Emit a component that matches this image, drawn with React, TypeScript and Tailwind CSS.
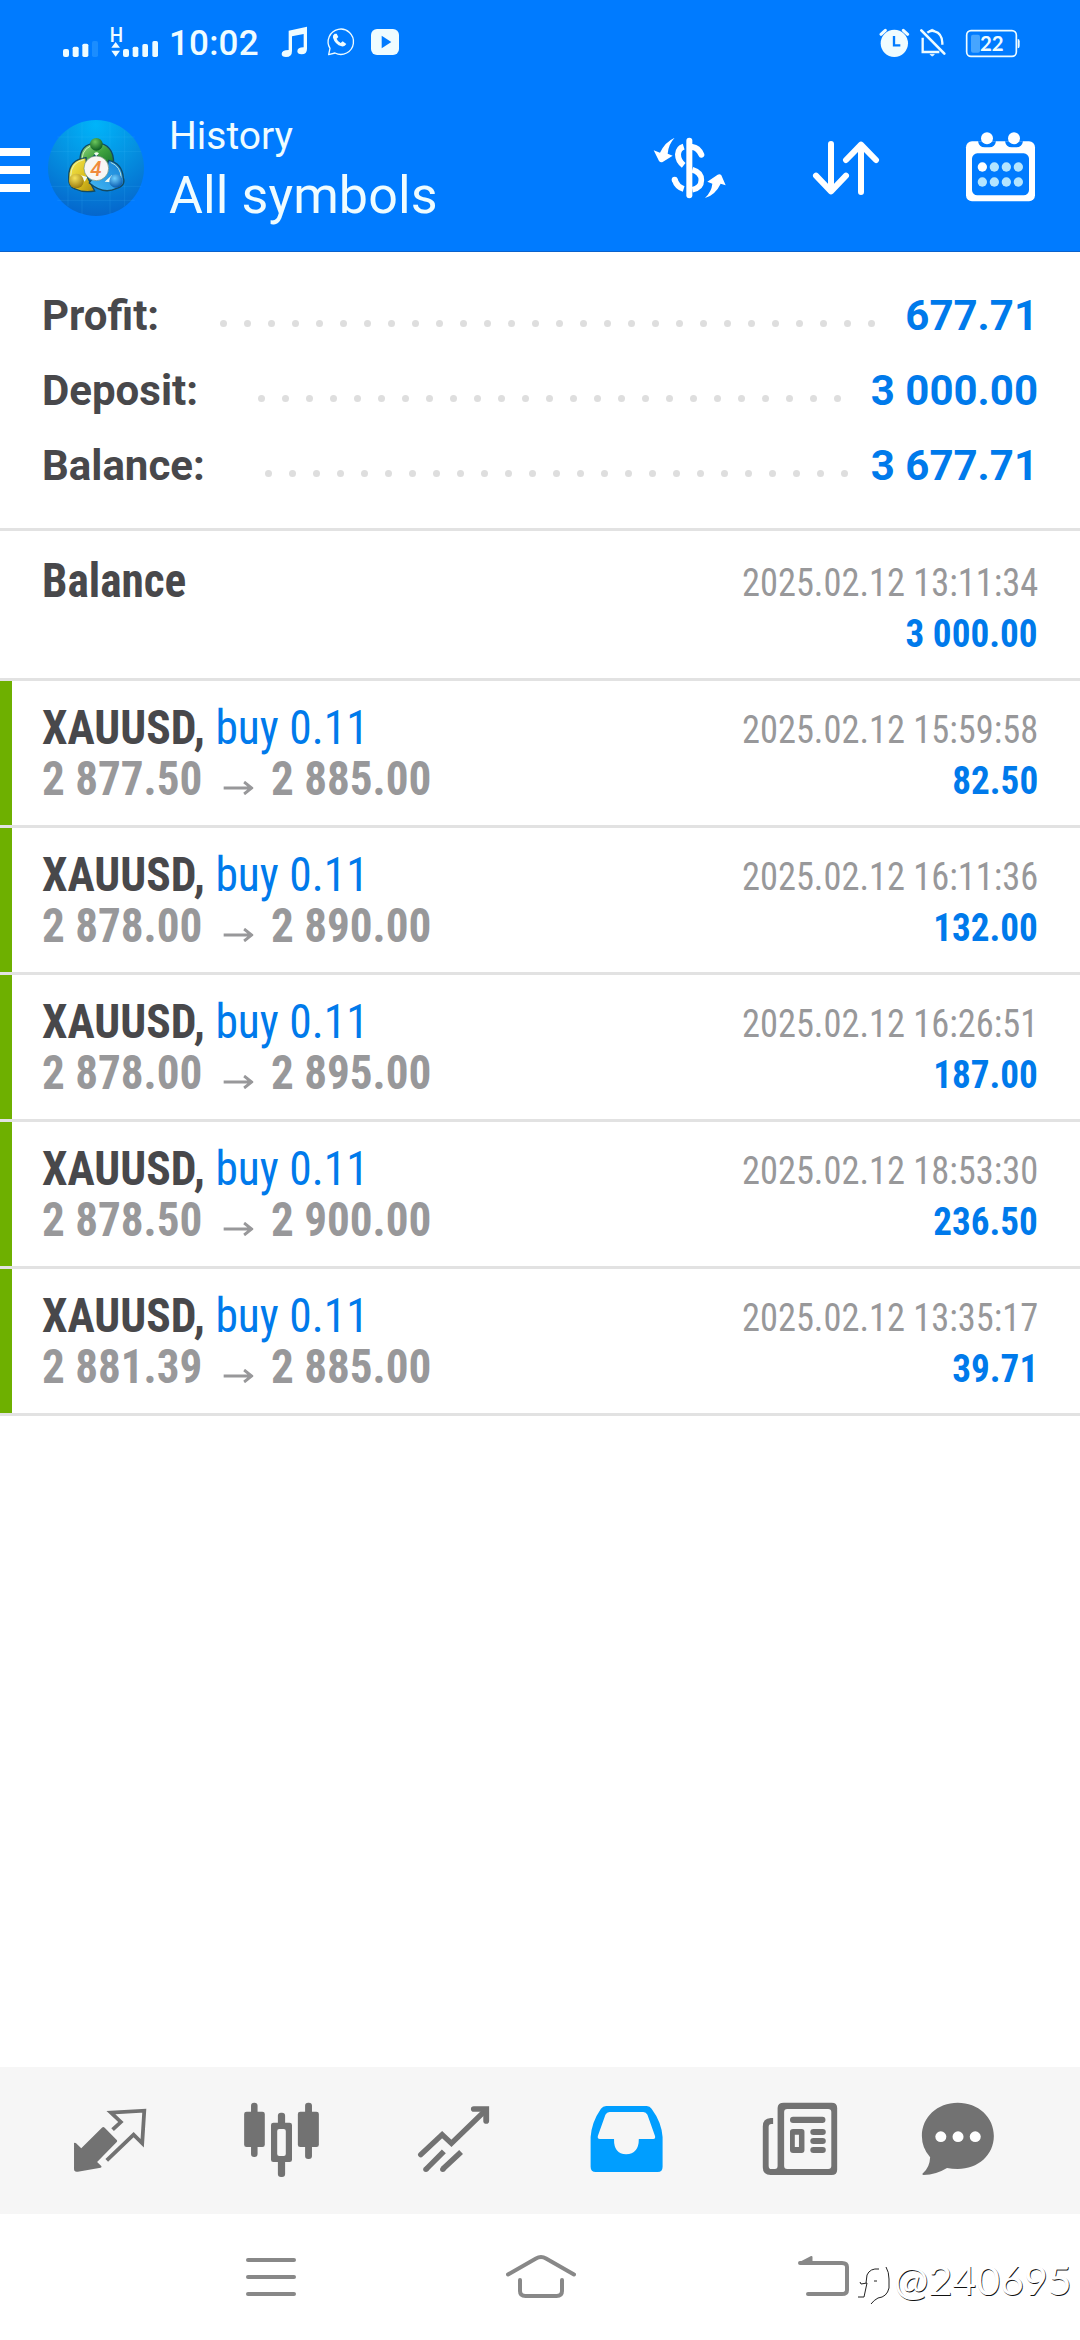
import type { ReactNode } from "react";

type Trade = { open: string; close: string; time: string; profit: string };

const trades: Trade[] = [
  { open: "2 877.50", close: "2 885.00", time: "2025.02.12 15:59:58", profit: "82.50" },
  { open: "2 878.00", close: "2 890.00", time: "2025.02.12 16:11:36", profit: "132.00" },
  { open: "2 878.00", close: "2 895.00", time: "2025.02.12 16:26:51", profit: "187.00" },
  { open: "2 878.50", close: "2 900.00", time: "2025.02.12 18:53:30", profit: "236.50" },
  { open: "2 881.39", close: "2 885.00", time: "2025.02.12 13:35:17", profit: "39.71" },
];

function StatusBar() {
  return (
    <div className="flex h-[84px] items-start pt-[25px] text-[#effcff]">
      <svg className="ml-[62px] h-[35px] w-[37px] shrink-0" viewBox="186 75 111 105" fill="currentColor">
        <rect x="189" y="147" width="18" height="24" rx="6" />
        <rect x="218" y="140" width="18" height="31" rx="5" />
        <rect x="247" y="131" width="18" height="40" rx="5" />
        <rect x="276" y="123" width="18" height="48" rx="5" fill="#1b8dff" />
      </svg>
      <svg className="ml-[10px] h-[35px] w-[50px] shrink-0" viewBox="327 75 150 105" fill="currentColor">
        <text x="329" y="125" fontSize="59" fontWeight="500" fontFamily="Roboto, sans-serif" textLength="40" lengthAdjust="spacingAndGlyphs">H</text>
        <path d="M347 126l13 17h-26zM347 170l13-18h-26z" />
        <rect x="369" y="147" width="18" height="24" rx="6" />
        <rect x="398" y="140" width="17" height="31" rx="5" />
        <rect x="427" y="132" width="17" height="39" rx="5" />
        <rect x="457" y="123" width="17" height="48" rx="5" />
      </svg>
      <span className="ml-[10px] mt-[-3px] w-[92px] whitespace-nowrap text-[35px] font-medium leading-[43px] tracking-[0.2px]">10:02</span>
      <svg className="ml-[20px] h-[35px] w-[27px] shrink-0" viewBox="843 75 81 105" fill="currentColor">
        <path d="M866 92L921 80V146Q921 163 905 163Q892 163 892 154Q892 142 911 142V102L876 109V153Q876 171 858 171Q845 171 845 162Q845 150 866 150Z" />
      </svg>
      <svg className="ml-[17px] h-[35px] w-[30px] shrink-0" viewBox="974 75 90 105" fill="none" stroke="currentColor" strokeWidth="4">
        <path d="M985 164l4-19a38 38 0 1 1 15 14z" strokeLinejoin="round" />
        <path d="M1003 101q-7 4-5 12q6 20 26 26q9 2 14-7l-11-8-6 5q-9-4-12-13l5-5-5-10z" fill="currentColor" stroke="none" />
      </svg>
      <svg className="ml-[15px] h-[35px] w-[30px] shrink-0" viewBox="1107 75 90 105">
        <rect x="1110" y="87" width="84" height="78" rx="18" fill="currentColor" />
        <path d="M1142 107L1171 126L1142 145Z" fill="#007bff" />
      </svg>
      <svg className="ml-auto h-[35px] w-[31px] shrink-0" viewBox="776 75 93 105" fill="currentColor">
        <circle cx="822" cy="130" r="41" />
        <path d="M782 103l13-12M862 103l-13-12" stroke="currentColor" strokeWidth="9" strokeLinecap="round" />
        <path d="M821 108v28h19" fill="none" stroke="#007bff" strokeWidth="7" />
      </svg>
      <svg className="ml-[9px] h-[35px] w-[28px] shrink-0" viewBox="897 75 84 105" fill="none" stroke="currentColor" strokeWidth="7">
        <path d="M904 91l69 70" strokeLinecap="round" strokeWidth="8" />
        <path d="M908 113v43h50M922 98q10-8 22-4q22 6 23 34v6" />
        <path d="M928 92q8-9 17 0zM930 163h13q-6 10-13 0z" fill="currentColor" strokeWidth="2" />
      </svg>
      <svg className="ml-[18px] mr-[59px] h-[35px] w-[56px] shrink-0" viewBox="1035 75 168 105" fill="currentColor">
        <rect x="1040" y="92" width="149" height="77" rx="13" fill="none" stroke="currentColor" strokeWidth="5" />
        <path d="M1193 117q6 0 6 7v14q0 7-6 7z" />
        <rect x="1053" y="104" width="27" height="54" rx="6" fill="#46a5ff" />
        <text x="1080" y="153" fontSize="60" fontWeight="700" fontFamily="Lato, sans-serif" textLength="71" lengthAdjust="spacingAndGlyphs">22</text>
      </svg>
    </div>
  );
}

function Logo() {
  return (
    <svg className="ml-[18px] size-[96px] shrink-0" viewBox="144 359 288 288">
      <defs>
        <radialGradient id="disc" cx="0.5" cy="0.05" r="0.95">
          <stop offset="0" stopColor="#00b4fa" />
          <stop offset="0.5" stopColor="#0590e0" />
          <stop offset="1" stopColor="#0566cc" />
        </radialGradient>
        <linearGradient id="green" x1="0" y1="0" x2="1" y2="1">
          <stop offset="0" stopColor="#a6e08a" />
          <stop offset="0.5" stopColor="#3fa23f" />
          <stop offset="1" stopColor="#13702a" />
        </linearGradient>
        <linearGradient id="yellow" x1="0" y1="0" x2="1" y2="1">
          <stop offset="0" stopColor="#f9ee5a" />
          <stop offset="0.6" stopColor="#d9bd1c" />
          <stop offset="1" stopColor="#a98a10" />
        </linearGradient>
        <linearGradient id="blue" x1="1" y1="0" x2="0" y2="1">
          <stop offset="0" stopColor="#1580d4" />
          <stop offset="1" stopColor="#43b8f5" />
        </linearGradient>
        <radialGradient id="headGreen" cx="0.4" cy="0.3" r="0.7">
          <stop offset="0" stopColor="#6cc75c" />
          <stop offset="1" stopColor="#0d5f22" />
        </radialGradient>
        <radialGradient id="headYellow" cx="0.4" cy="0.3" r="0.7">
          <stop offset="0" stopColor="#f7e35a" />
          <stop offset="1" stopColor="#9c7c10" />
        </radialGradient>
        <radialGradient id="headBlue" cx="0.4" cy="0.3" r="0.7">
          <stop offset="0" stopColor="#6fd0ff" />
          <stop offset="1" stopColor="#0a5cb0" />
        </radialGradient>
      </defs>
      <circle cx="288" cy="503" r="144" fill="url(#disc)" />
      <path d="M204 390v228M246 368v274M330 368v274M374 390v228M172 410h232M152 453h272M152 558h272M172 600h232" stroke="#4fc4ff" strokeOpacity="0.22" strokeWidth="2" />
      <g stroke="#124a63" strokeWidth="4">
        <path d="M240 484Q238 432 289 427Q342 432 341 490Q336 506 318 500L288 462L262 482Z" fill="url(#green)" />
        <path d="M258 472Q206 478 206 530Q204 560 226 566Q250 578 284 572L262 530Z" fill="url(#yellow)" />
        <path d="M326 480Q366 488 370 532Q378 556 350 564Q310 584 268 548L280 530L312 526Z" fill="url(#blue)" />
      </g>
      <path d="M282 459L289 468L297 459Q290 453 282 459ZM240 524L262 530L254 544ZM314 544L336 524L334 546Z" fill="#f2fbf2" />
      <path d="M246 474Q250 438 288 433M212 528Q212 486 252 478M364 534Q362 498 332 486" fill="none" stroke="#e6fbd8" strokeOpacity="0.75" strokeWidth="3" />
      <circle cx="289" cy="432" r="19" fill="url(#headGreen)" />
      <circle cx="229" cy="542" r="22" fill="url(#headYellow)" />
      <circle cx="348" cy="542" r="20" fill="url(#headBlue)" />
      <circle cx="289" cy="504" r="37" fill="#f8f6f4" stroke="#6d8f78" strokeWidth="2" />
      <text x="288" y="526" textAnchor="middle" fontSize="62" fontStyle="italic" fontWeight="500" fontFamily="Roboto, sans-serif" fill="#f08a3c">4</text>
    </svg>
  );
}

function ActionBar() {
  return (
    <div className="flex h-[168px] items-center text-white">
      <div className="mt-[4px] flex w-[30px] flex-col gap-[10px]">
        <div className="h-[8px] bg-white" />
        <div className="h-[8px] bg-white" />
        <div className="h-[8px] bg-white" />
      </div>
      <Logo />
      <div className="ml-[25px] flex flex-col self-start whitespace-nowrap pt-[28px] text-[#effcff]">
        <span className="text-[39px] leading-[48px]">History</span>
        <span className="mt-[6px] text-[52px] leading-[60px] tracking-[0.1px]">All symbols</span>
      </div>
      <svg className="ml-auto h-[64px] w-[73px] shrink-0" viewBox="100 408 219 192" fill="none" stroke="currentColor">
        <path d="M209 422v164" strokeWidth="18" strokeLinecap="round" />
        <path d="M192 440q-16 5-17 23q0 20 17 33" strokeWidth="18" />
        <path d="M218 441q18 2 27 23" strokeWidth="18" strokeLinecap="round" />
        <path d="M218 509q27 8 27 31q0 24-27 29" strokeWidth="17" />
        <path d="M165 539q7 22 27 28" strokeWidth="18" strokeLinecap="butt" />
        <circle cx="165" cy="539" r="9" fill="currentColor" stroke="none" />
        <path d="M165 413q-19 20-21 48l15 6-30 19q-7 2-11-3l-16-32 19 7q15-32 44-45zM256 594q20-20 22-43l-15-6 31-21q7-3 11 2l13 30-15-5q-16 34-47 43z" fill="currentColor" stroke="none" />
      </svg>
      <svg className="ml-[86px] h-[56px] w-[68px] shrink-0" viewBox="576 420 204 168" fill="none" stroke="currentColor" strokeWidth="18" strokeLinecap="round" strokeLinejoin="round">
        <path d="M633 432v142M588 527l45 47 45-47M723 576V434M678 480l45-46 45 46" />
      </svg>
      <svg className="mb-[3px] ml-[85px] mr-[44px] h-[71px] w-[71px] shrink-0" viewBox="1035 392 213 213">
        <rect x="1038" y="423" width="207" height="180" rx="18" fill="#fff" />
        <rect x="1056" y="459" width="171" height="126" rx="16" fill="#007bff" />
        <path d="M1074 423h54q-3 18-20 18h-14q-17 0-20-18zM1155 423h54q-3 18-20 18h-14q-17 0-20-18z" fill="#007bff" />
        <circle cx="1101" cy="414" r="18" fill="#fff" />
        <circle cx="1182" cy="414" r="18" fill="#fff" />
        <g fill="#b3e5ff">
          <circle cx="1087" cy="500" r="14" fill="#fff" />
          <circle cx="1123" cy="500" r="14" />
          <circle cx="1159" cy="500" r="14" />
          <circle cx="1195" cy="500" r="14" />
          <circle cx="1087" cy="545" r="14" />
          <circle cx="1123" cy="545" r="14" />
          <circle cx="1159" cy="545" r="14" />
          <circle cx="1195" cy="545" r="14" />
        </g>
      </svg>
    </div>
  );
}

function Dots({ count, className }: { count: number; className: string }) {
  return (
    <div className={`flex gap-[17px] pt-[15px] ${className}`}>
      {Array.from({ length: count }, (_, i) => (
        <div key={i} className="size-[7px] rounded-full bg-[#dedede]" />
      ))}
    </div>
  );
}

function SummaryRow({ label, value, children }: { label: string; value: string; children: ReactNode }) {
  return (
    <div className="flex h-[75px] items-center pr-[42px] text-[42px] leading-[50px]">
      <span className="w-0 whitespace-nowrap font-bold text-[#48484b]">{label}</span>
      {children}
      <span className="ml-auto whitespace-nowrap font-bold text-[#007aeb]">{value}</span>
    </div>
  );
}

function Stamp({ time, amount }: { time: string; amount: string }) {
  return (
    <div className="ml-auto flex flex-col items-end whitespace-nowrap pr-[42px] text-[39px] leading-[51px] [font-stretch:75%]">
      <span className="origin-right scale-x-[0.934] text-[#98989a]">{time}</span>
      <span className="origin-right scale-x-[0.953] font-bold text-[#007aeb]">{amount}</span>
    </div>
  );
}

function TradeRow({ trade }: { trade: Trade }) {
  return (
    <div className="flex h-[147px] border-b-[3px] border-[#e2e2e2]">
      <div className="w-[12px] bg-[#6eb000]" />
      <div className="flex flex-1 pt-[24px]">
        <div className="ml-[30px] mt-[-3px] flex flex-col whitespace-nowrap text-[48px] leading-[51px] [font-stretch:75%]">
          <div className="origin-left scale-x-[0.948] self-start">
            <span className="font-bold text-[#48484b]">XAUUSD, </span>
            <span className="text-[#007aeb]">buy 0.11</span>
          </div>
          <div className="flex origin-left scale-x-[0.94] self-start font-bold text-[#98989a]">
            <span>{trade.open}</span>
            <svg className="ml-[22px] mr-[19px] mt-[28px] h-[14px] w-[32px]" viewBox="0 0 32 14" fill="none" stroke="currentColor" strokeWidth="3">
              <path d="M0 7h29M22 1l8 6-8 6" />
            </svg>
            <span>{trade.close}</span>
          </div>
        </div>
        <Stamp time={trade.time} amount={trade.profit} />
      </div>
    </div>
  );
}

function Cell({ box, children }: { box: string; children: ReactNode }) {
  return (
    <svg className="h-[147px] w-[172px] shrink-0" viewBox={box} preserveAspectRatio="none" fill="currentColor" stroke="none">
      {children}
    </svg>
  );
}

function TabBar() {
  return (
    <div className="flex h-[147px] bg-[#f6f6f6] pl-[24px] text-[#727272]">
      <Cell box="69.7 21 499.5 441">
        <path d="M215 249q3-2 6 1l15 15 60-62q4-4 8 0l35 37q3 3 0 6l-57 60 12 12q3 4-2 5l-66 12q-11 2-11-8z" />
        <path d="M327 209l24-23-29-28 97-6-6 98-25-26-78 77" fill="none" stroke="currentColor" strokeWidth="11" />
      </Cell>
      <Cell box="569.2 21 499.5 441">
        <rect x="729" y="128" width="19" height="163" rx="9" />
        <rect x="709" y="155" width="60" height="106" rx="7" />
        <rect x="886" y="128" width="20" height="169" rx="9" />
        <rect x="865" y="155" width="61" height="106" rx="7" />
        <rect x="807" y="158" width="21" height="193" rx="9" />
        <rect x="787" y="188" width="61" height="118" rx="7" />
        <rect x="805" y="207" width="25" height="81" rx="6" fill="#f6f6f6" />
      </Cell>
      <Cell box="1068.7 21 499.5 441">
        <g fill="none" stroke="currentColor" strokeWidth="16">
          <path d="M1222 284l62-60 27 26 98-98" strokeLinecap="round" />
          <path d="M1376 147h36v36" strokeWidth="17" strokeLinecap="round" />
          <path d="M1238 327l51-53M1286 327l53-51" />
        </g>
        <circle cx="1237" cy="328" r="8" />
        <circle cx="1286" cy="328" r="8" />
      </Cell>
      <Cell box="0 21 499.5 441">
        <path fill="#009eff" fillRule="evenodd" d="M192 138h118q9 0 14 8q29 40 32 85v89q0 16-14 16H162q-15 0-15-16v-89q3-45 30-85q6-8 15-8zM202 156q-8 0-12 8l-22 64q-2 9 6 9h41q-1 45 35 46q37-1 37-46h42q7 0 5-9l-22-64q-4-8-12-8z" />
      </Cell>
      <Cell box="499.5 21 499.5 441">
        <path fillRule="evenodd" d="M708 128h139q16 0 16 16v185q0 16-16 16H670q-23 0-23-23V199q0-24 23-25h7v18h-5q-8 0-8 10v115q0 10 8 10h10q8 0 8-9V144q0-16 18-16zM718 147q-9 0-9 9v162q0 9 9 9h119q9 0 9-9V156q0-9-9-9z" />
        <path fillRule="evenodd" d="M735 207h25q8 0 8 8v55q0 9-8 9h-25q-9 0-9-9v-55q0-8 9-8zM740 224v37h12v-37z" />
        <rect x="726" y="170" width="103" height="19" rx="9" />
        <rect x="785" y="207" width="45" height="18" rx="9" />
        <rect x="785" y="234" width="45" height="18" rx="9" />
        <rect x="785" y="261" width="45" height="18" rx="9" />
      </Cell>
      <Cell box="999 21 499.5 441">
        <path d="M1213 128c60 0 105 43 105 100s-46 99-105 99q-16 0-31-3q-31 20-68 21q-6-1-2-5q20-18 21-48q-24-28-24-64c0-57 45-100 104-100z" />
        <g fill="#fff">
          <circle cx="1164" cy="230" r="16" />
          <circle cx="1214" cy="230" r="16" />
          <circle cx="1264" cy="230" r="16" />
        </g>
      </Cell>
    </div>
  );
}

function SystemBar() {
  return (
    <div className="relative flex h-[126px] items-start pt-[40px] text-[#888]">
      <div className="ml-[246px] mt-[4px] flex w-[50px] flex-col gap-[13px]">
        <div className="h-[4px] rounded-full bg-[#888]" />
        <div className="h-[4px] rounded-full bg-[#888]" />
        <div className="h-[4px] rounded-full bg-[#888]" />
      </div>
      <svg className="ml-[210px] h-[45px] w-[70px]" viewBox="0 0 70 45" fill="none" stroke="currentColor" strokeWidth="4" strokeLinecap="round" strokeLinejoin="round">
        <path d="M2 20.500L30 4.500Q35 1.500 40 4.500L68 20.500M14 26V37Q14 42 19.500 42H50.500Q56 42 56 37V26" />
      </svg>
      <svg className="ml-[222px] h-[45px] w-[52px]" viewBox="0 0 52 45" fill="none" stroke="currentColor" strokeWidth="4" strokeLinecap="round" strokeLinejoin="round">
        <path d="M2 9H44Q49 9 49 13V36Q49 40 44 40H10" />
        <path d="M2 9L13.500 3V9Z" fill="currentColor" strokeWidth="2" />
      </svg>
      <div className="absolute left-[857px] top-[43px] flex items-start whitespace-nowrap text-white">
        <svg className="mt-[6px] h-[42px] w-[37px]" viewBox="0 0 37 42" fill="none" stroke="#222" strokeWidth="1">
          <path d="M22 6Q13 5 10 12L9 20M3 19L4 21L10 20L7 34L1 34M17 18L20 18M29 4Q32 9 32 16V25Q30 34 21 35Q17 37 14 41" />
        </svg>
        <span className="font-[Lato,sans-serif] text-[41px] font-normal leading-[46px] tracking-[0.1px] [text-shadow:0.8px_0.8px_0_#111]">@240695</span>
      </div>
    </div>
  );
}

export default function App() {
  return (
    <div className="flex h-[2340px] w-[1080px] flex-col overflow-hidden bg-white font-[Roboto,sans-serif]">
      <header className="h-[252px] border-b border-[#0a62cc] bg-[#007bff]">
        <StatusBar />
        <ActionBar />
      </header>
      <section className="h-[279px] border-b-[3px] border-[#e2e2e2] pl-[42px] pt-[26px]">
        <SummaryRow label="Profit:" value="677.71"><Dots count={28} className="ml-[178px]" /></SummaryRow>
        <SummaryRow label="Deposit:" value="3 000.00"><Dots count={25} className="ml-[216px]" /></SummaryRow>
        <SummaryRow label="Balance:" value="3 677.71"><Dots count={25} className="ml-[223px]" /></SummaryRow>
      </section>
      <main className="flex-1">
        <div className="flex h-[150px] border-b-[3px] border-[#e2e2e2] pl-[42px] pt-[27px]">
          <span className="mt-[-3px] origin-left scale-x-[0.943] self-start text-[48px] font-bold leading-[51px] text-[#48484b] [font-stretch:75%]">Balance</span>
          <Stamp time="2025.02.12 13:11:34" amount="3 000.00" />
        </div>
        {trades.map((trade) => (
          <TradeRow key={trade.time} trade={trade} />
        ))}
      </main>
      <TabBar />
      <SystemBar />
    </div>
  );
}
